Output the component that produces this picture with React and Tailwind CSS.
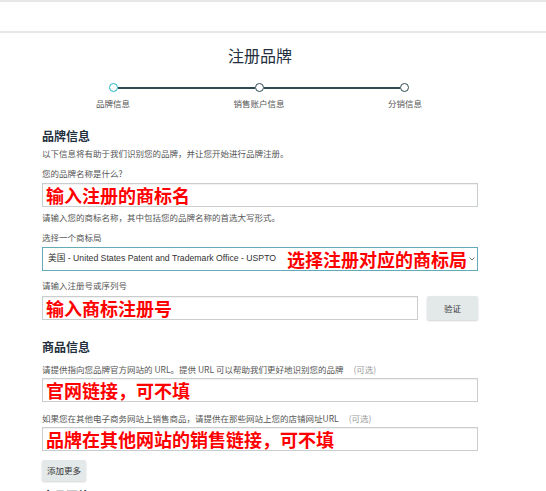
import React from "react";

const cjk = "font-['Noto_Sans_CJK_SC','Liberation_Sans',sans-serif]";

function Label({ children, optional, className = "" }) {
  return (
    <div className={`text-[8.5px] leading-[12px] text-[#555] whitespace-nowrap ${className}`}>
      {children}
      {optional && <span className="ml-[10px] text-[#999]">(可选)</span>}
    </div>
  );
}

function RedInput({ text, className = "" }) {
  return (
    <div
      className={`h-[24px] border border-[#c9cdcd] bg-white flex items-center pl-[3px] shadow-[inset_0_1px_1px_rgba(0,0,0,0.06)] ${className}`}
    >
      <span className="text-[18px] leading-[20px] font-bold text-[#ff0000] whitespace-nowrap">{text}</span>
    </div>
  );
}

export default function App() {
  return (
    <div className={`w-[546px] h-[491px] overflow-hidden bg-white ${cjk}`}>
      <div className="h-[33px] border-t-2 border-b-2 border-[#e7e7e7]" />
      <div className="ml-[42px] w-[436px] flex flex-col">
        <div className="mt-[10px] text-center text-[16px] leading-[24px] text-[#232f3e]">注册品牌</div>

        {/* stepper */}
        <div className="mt-[16px] ml-[67px] w-[300px] flex items-center">
          <div className="w-[9px] h-[9px] rounded-full border-[1.5px] border-[#22b2c6] bg-white" />
          <div className="flex-1 h-[2px] bg-[#2f4a50]" />
          <div className="w-[9px] h-[9px] rounded-full border-[1.5px] border-[#2f4a50] bg-white" />
          <div className="flex-1 h-[2px] bg-[#2f4a50]" />
          <div className="w-[9px] h-[9px] rounded-full border-[1.5px] border-[#2f4a50] bg-white" />
        </div>
        <div className="mt-[5px] ml-[31px] w-[372px] flex justify-between text-[8.5px] leading-[12px] text-[#555]">
          <div className="w-[80px] text-center">品牌信息</div>
          <div className="w-[80px] text-center">销售账户信息</div>
          <div className="w-[80px] text-center">分销信息</div>
        </div>

        <div className="mt-[19px] text-[12px] leading-[16px] font-bold text-[#232f3e]">品牌信息</div>
        <Label className="mt-[3px]">以下信息将有助于我们识别您的品牌，并让您开始进行品牌注册。</Label>

        <Label className="mt-[8px]">您的品牌名称是什么?</Label>
        <RedInput className="mt-[4px]" text="输入注册的商标名" />
        <Label className="mt-[4px]">请输入您的商标名称，其中包括您的品牌名称的首选大写形式。</Label>

        <Label className="mt-[8px]">选择一个商标局</Label>
        <div className="mt-[4px] h-[24px] border border-[#64aab8] bg-white flex items-center pl-[5px] pr-[5px] whitespace-nowrap overflow-hidden">
          <span className="shrink-0 text-[8.7px] text-[#333] font-['Liberation_Sans','Noto_Sans_CJK_SC',sans-serif]">
            美国 - United States Patent and Trademark Office - USPTO
          </span>
          <span className="shrink-0 ml-[11px] text-[18px] leading-[20px] font-bold text-[#ff0000]">选择注册对应的商标局</span>
          <svg className="shrink-0 ml-[2px]" width="6" height="4" viewBox="0 0 6 4">
            <path d="M0.5 0.5 L3 3 L5.5 0.5" fill="none" stroke="#666" strokeWidth="0.9" />
          </svg>
        </div>

        <Label className="mt-[8px]">请输入注册号或序列号</Label>
        <div className="mt-[5px] flex items-center">
          <RedInput className="w-[376px]" text="输入商标注册号" />
          <button className="ml-[9px] w-[51px] h-[24px] bg-[#e3e8e9] rounded-[2px] shadow-[0_1px_2px_rgba(0,0,0,0.18)] text-[8.5px] text-[#333]">
            验证
          </button>
        </div>

        <div className="mt-[19px] text-[12px] leading-[16px] font-bold text-[#232f3e]">商品信息</div>
        <Label className="mt-[8px]" optional>
          请提供指向您品牌官方网站的 URL。提供 URL 可以帮助我们更好地识别您的品牌
        </Label>
        <RedInput className="mt-[3px]" text="官网链接，可不填" />

        <Label className="mt-[10px]" optional>
          如果您在其他电子商务网站上销售商品，请提供在那些网站上您的店铺网址URL
        </Label>
        <RedInput className="mt-[3px] h-[23px]" text="品牌在其他网站的销售链接，可不填" />

        <button className="mt-[9px] w-[44px] h-[21px] bg-[#e3e8e9] rounded-[2px] shadow-[0_1px_2px_rgba(0,0,0,0.18)] text-[8.5px] text-[#333]">
          添加更多
        </button>
        <div className="mt-[7px] text-[12px] leading-[16px] font-bold text-[#232f3e]">商品图片</div>
      </div>
    </div>
  );
}
